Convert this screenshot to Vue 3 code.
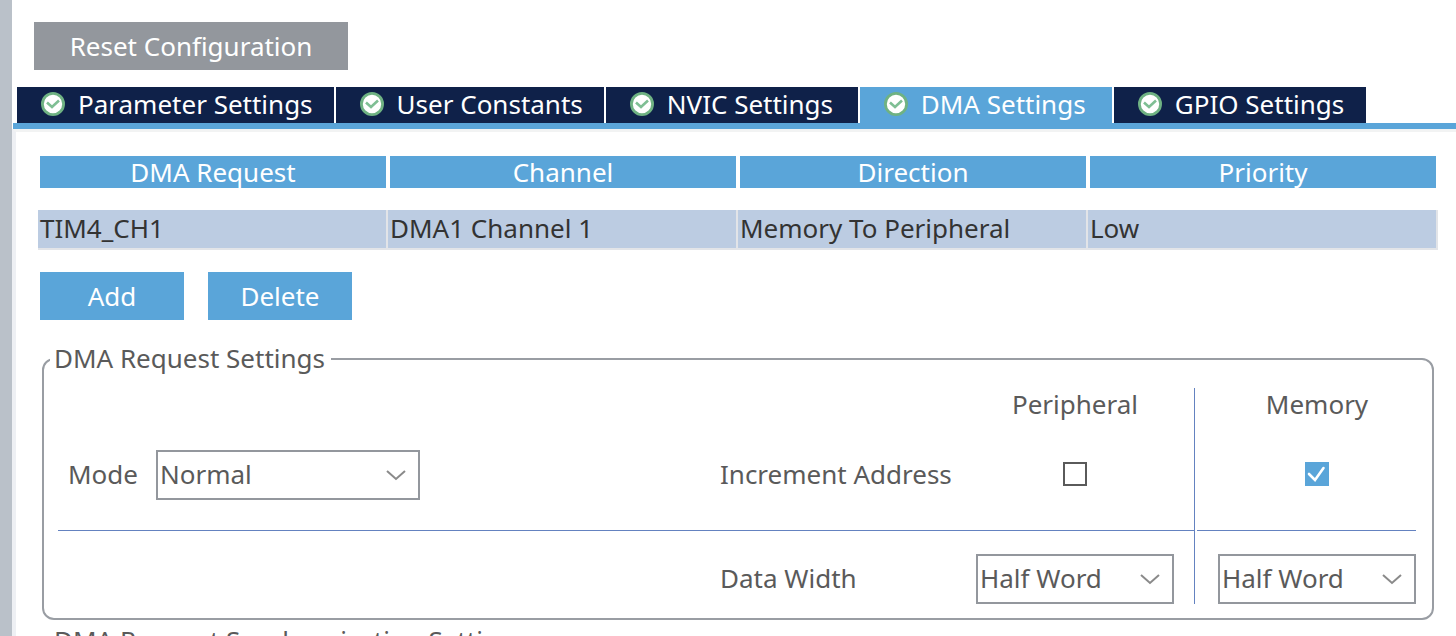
<script setup>
import { ref } from 'vue';

const tabs = ref([
  'Parameter Settings',
  'User Constants',
  'NVIC Settings',
  'DMA Settings',
  'GPIO Settings'
]);
const activeTab = ref('DMA Settings');

const columns = ['DMA Request', 'Channel', 'Direction', 'Priority'];
const requests = ref([
  ['TIM4_CH1', 'DMA1 Channel 1', 'Memory To Peripheral', 'Low']
]);

const mode = ref('Normal');
const peripheralIncrement = ref(false);
const memoryIncrement = ref(true);
const peripheralWidth = ref('Half Word');
const memoryWidth = ref('Half Word');
const widths = ['Byte', 'Half Word', 'Word'];
</script>

<template>
  <div class="config">
    <button type="button" class="btn reset">Reset Configuration</button>

    <nav class="tabs" role="tablist">
      <button
        v-for="tab in tabs"
        :key="tab"
        type="button"
        role="tab"
        class="tab"
        :class="{ active: tab === activeTab }"
        :aria-selected="tab === activeTab"
        @click="activeTab = tab"
      >
        <svg class="tab-icon" viewBox="0 0 24 24" aria-hidden="true">
          <circle cx="12" cy="12" r="10.6" fill="#fff" stroke="#6fb283" stroke-width="2.8" />
          <path d="M6 10.5L11 15L18 8.5" fill="none" stroke="#7fbf94" stroke-width="2.6" />
        </svg>
        <span>{{ tab }}</span>
      </button>
    </nav>

    <main class="panel">
      <table class="requests">
        <thead>
          <tr>
            <th v-for="column in columns" :key="column" scope="col">{{ column }}</th>
          </tr>
        </thead>
        <tbody>
          <tr v-for="request in requests" :key="request[0]">
            <td v-for="value in request" :key="value">{{ value }}</td>
          </tr>
        </tbody>
      </table>

      <div class="actions">
        <button type="button" class="btn">Add</button>
        <button type="button" class="btn">Delete</button>
      </div>

      <fieldset class="group">
        <legend>DMA Request Settings</legend>
        <div class="settings">
          <div class="divider"></div>
          <div class="heading peripheral">Peripheral</div>
          <div class="heading memory">Memory</div>

          <div class="cell middle mode">
            <label for="mode">Mode</label>
            <span class="select">
              <select id="mode" v-model="mode">
                <option>Normal</option>
                <option>Circular</option>
              </select>
              <svg viewBox="0 0 20 12" aria-hidden="true"><path d="M1 2L10 10L19 2" /></svg>
            </span>
          </div>
          <div class="cell middle name">
            <label for="peripheral-increment">Increment Address</label>
          </div>
          <div class="cell middle peripheral">
            <span class="check">
              <input id="peripheral-increment" v-model="peripheralIncrement" type="checkbox" />
              <svg viewBox="0 0 24 24" aria-hidden="true"><path d="M4 12L10 18L18.5 6" /></svg>
            </span>
          </div>
          <div class="cell middle memory">
            <span class="check">
              <input v-model="memoryIncrement" type="checkbox" aria-label="Memory" />
              <svg viewBox="0 0 24 24" aria-hidden="true"><path d="M4 12L10 18L18.5 6" /></svg>
            </span>
          </div>

          <div class="cell bottom name">
            <label for="peripheral-width">Data Width</label>
          </div>
          <div class="cell bottom peripheral">
            <span class="select">
              <select id="peripheral-width" v-model="peripheralWidth">
                <option v-for="width in widths" :key="width">{{ width }}</option>
              </select>
              <svg viewBox="0 0 20 12" aria-hidden="true"><path d="M1 2L10 10L19 2" /></svg>
            </span>
          </div>
          <div class="cell bottom memory">
            <span class="select">
              <select v-model="memoryWidth" aria-label="Memory">
                <option v-for="width in widths" :key="width">{{ width }}</option>
              </select>
              <svg viewBox="0 0 20 12" aria-hidden="true"><path d="M1 2L10 10L19 2" /></svg>
            </span>
          </div>
        </div>
      </fieldset>

      <fieldset class="group">
        <legend>DMA Request Synchronization Settings</legend>
      </fieldset>
    </main>
  </div>
</template>

<style>
body {
  margin: 0;
  background: #fff;
}
</style>

<style scoped>
.config {
  box-sizing: border-box;
  height: 100vh;
  overflow: hidden;
  display: flex;
  flex-direction: column;
  align-items: stretch;
  padding-top: 22px;
  border-left: 12px solid #bac1c9;
  color: #5a5a5a;
  font-family: "Noto Sans", "Open Sans", sans-serif;
  font-size: 26px;
  line-height: 32px;
}

button,
select {
  font: inherit;
  color: inherit;
}

.btn {
  min-width: 144px;
  height: 48px;
  padding: 0 20px;
  border: 0;
  background: #5aa5d9;
  color: #fff;
}

.reset {
  align-self: flex-start;
  flex: none;
  min-width: 314px;
  margin: 0 0 17px 22px;
  background: #93979d;
}

.tabs {
  flex: none;
  display: flex;
  gap: 2px;
  margin-left: 1px;
  padding-left: 4px;
  border-bottom: 6px solid #5aa5d9;
}

.tab {
  display: flex;
  align-items: center;
  gap: 13px;
  min-width: 252px;
  height: 36px;
  padding: 0 21px 2px 24px;
  border: 0;
  background: #0f2149;
  color: #fff;
  white-space: nowrap;
}

.tab.active {
  background: #5aa5d9;
}

.tab-icon {
  flex: none;
  width: 24px;
  height: 24px;
}

.panel {
  flex: 1;
  border-top: 3px solid #f2f3f3;
  border-left: 4px solid #eef0f4;
  padding: 24px 18px 0 22px;
}

.requests {
  width: 100%;
  table-layout: fixed;
  border-spacing: 0;
}

.requests tbody::before {
  content: "";
  display: block;
  height: 22px;
}

.requests th {
  height: 32px;
  padding: 0;
  border: solid #fff;
  border-width: 0 2px;
  background: #5aa5d9;
  color: #fff;
  font-weight: 400;
}

.requests td {
  height: 36px;
  padding: 0 0 2px 2px;
  border: solid #e2e4e8;
  border-width: 0 2px 2px 0;
  background: #bccce2;
  color: #333;
}

.actions {
  display: flex;
  gap: 24px;
  margin: 22px 0 23px 2px;
}

.group {
  min-width: 0;
  margin: 0 4px 5px;
  padding: 13px 16px 14px 6px;
  border: 2px solid #999da3;
  border-radius: 12px;
}

.group legend {
  padding: 0 6px 2px 4px;
  line-height: 30px;
}

.settings {
  display: grid;
  grid-template-columns: 1fr 256px 218px 3px 219px;
  grid-template-rows: 32px 111px 73px;
  margin-left: 8px;
}

.divider {
  grid-area: 1 / 4 / 4 / 5;
  border-left: 1px solid #6482c0;
}

.heading {
  grid-row: 1;
  text-align: center;
}

.cell {
  display: flex;
  align-items: center;
}

.cell label {
  padding-bottom: 2px;
}

.middle {
  grid-row: 2;
  border-bottom: 1px solid #6482c0;
}

.bottom {
  grid-row: 3;
  padding-top: 23px;
}

.mode {
  grid-column: 1;
  gap: 18px;
  padding-left: 10px;
}

.mode .select {
  width: 264px;
}

.name {
  grid-column: 2;
}

.peripheral {
  grid-column: 3;
  justify-content: center;
  padding-right: 20px;
}

.memory {
  grid-column: 5;
  justify-content: center;
  padding-left: 21px;
}

.select,
.check {
  position: relative;
  display: flex;
}

.select {
  width: 100%;
}

.select select {
  appearance: none;
  width: 100%;
  height: 50px;
  padding: 0 36px 2px 2px;
  border: 2px solid #93979d;
  border-radius: 0;
  background: #fff;
}

.select svg {
  position: absolute;
  top: 19px;
  right: 14px;
  width: 20px;
  height: 12px;
  fill: none;
  stroke: #8a8a8a;
  stroke-width: 2;
  pointer-events: none;
}

.check {
  margin-bottom: 2px;
}

.check input {
  appearance: none;
  width: 24px;
  height: 24px;
  margin: 0;
  border: 2px solid #5a5a5a;
  background: #fff;
}

.check input:checked {
  border-color: #5aa5d9;
  background: #5aa5d9;
}

.check svg {
  position: absolute;
  inset: 0;
  fill: none;
  stroke: #fff;
  stroke-width: 2.6;
  stroke-linecap: round;
  pointer-events: none;
}
</style>
